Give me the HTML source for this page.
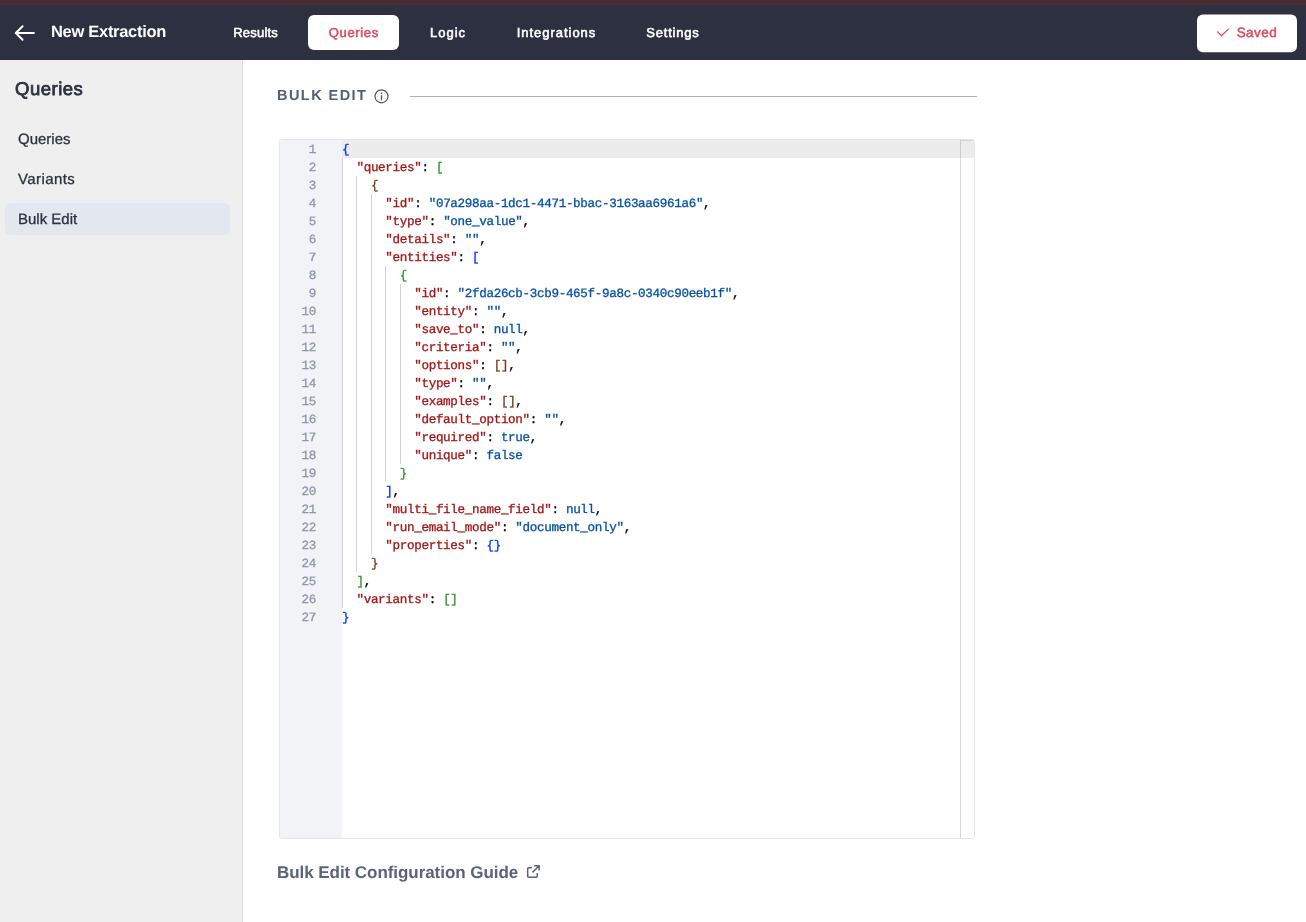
<!DOCTYPE html>
<html lang="en">
<head>
<meta charset="utf-8">
<title>New Extraction - Bulk Edit</title>
<style>
*{box-sizing:border-box;margin:0;padding:0}
html,body{width:1306px;height:922px;overflow:hidden;background:#fff}
body{font-family:"Liberation Sans",sans-serif;position:relative;color:#2d3142;-webkit-font-smoothing:antialiased;text-rendering:geometricPrecision}
.abs{position:absolute;white-space:nowrap;line-height:1}
#wrap{position:absolute;left:0;top:0;width:1306px;height:922px;will-change:transform;opacity:.999}
#strip{position:absolute;left:0;top:0;width:1306px;height:5px;background:#492c30}
#nav{position:absolute;left:0;top:5px;width:1306px;height:55px;background:#2d3040}
#side{position:absolute;left:0;top:60px;width:243px;height:862px;background:#efefef;border-right:1px solid #dcdcdc}
.tab{position:absolute;top:15px;height:35px;border-radius:6px;color:#fff;font-size:13px;font-weight:normal;-webkit-text-stroke:0.55px currentColor;line-height:35px;text-align:center;white-space:nowrap}
.tab.on{background:#fff;color:#dc4a5f}
#sel{position:absolute;left:5px;top:203px;width:225px;height:32px;border-radius:6px;background:#e3e7ef}
#ed{position:absolute;left:279px;top:139px;width:696px;height:700px;border:1px solid #e6e6e7;border-radius:3px;overflow:hidden;background:#fff;font-family:"Liberation Mono",monospace;font-size:12.6px;line-height:18px;letter-spacing:-0.336px;color:#000;-webkit-text-stroke:0.3px currentColor}
#gut{position:absolute;left:0;top:0;width:62px;height:698px;background:#f1f3f7}
#act{position:absolute;left:62px;top:0;width:632px;height:18px;background:#ececec}
#ovr{position:absolute;left:680px;top:0;width:1px;height:698px;background:rgba(127,127,127,.3)}
#ovt{position:absolute;left:681px;top:0;width:13px;height:1px;background:rgba(127,127,127,.22)}
#ed .n{position:absolute;left:0;width:36px;height:18px;margin-top:1px;text-align:right;color:#8e96ad;white-space:pre}
#ed .l{position:absolute;left:62px;height:18px;margin-top:1px;white-space:pre}
#ed .g{position:absolute;width:1px;height:18px;background:#d3d3d3}
#ed span{font-weight:normal}
.k{color:#a31515}.s{color:#0451a5}.b0{color:#0431fa}.b1{color:#319331}.b2{color:#7b3814}
</style>
</head>
<body>
<div id="wrap">
<div id="strip"></div>
<div id="nav"></div>
<svg class="abs" style="left:13px;top:23px" width="24" height="20" viewBox="0 0 24 20"><path d="M20.9 10H3.2M9.6 3.2L2.8 10l6.8 6.8" fill="none" stroke="#fff" stroke-width="2" stroke-linecap="round" stroke-linejoin="round"/></svg>
<div class="abs" id="t_title" style="left:51px;top:23.5px;font-size:16.5px;letter-spacing:-0.3px;font-weight:bold;color:#fff">New Extraction</div>
<div class="tab" id="tab1" style="left:213px;width:85px;letter-spacing:0.23px;text-indent:0.23px">Results</div>
<div class="tab on" id="tab2" style="left:308px;width:91px;letter-spacing:0.65px;text-indent:0.65px">Queries</div>
<div class="tab" id="tab3" style="left:409px;width:77px;letter-spacing:1.04px;text-indent:1.04px">Logic</div>
<div class="tab" id="tab4" style="left:496px;width:120px;letter-spacing:0.97px;text-indent:0.97px">Integrations</div>
<div class="tab" id="tab5" style="left:626px;width:93px;letter-spacing:0.76px;text-indent:0.76px">Settings</div>
<svg class="abs" style="left:1190px;top:10px" width="116" height="48" viewBox="0 0 116 48"><rect x="7" y="4.4" width="100" height="37.9" rx="6" fill="#fff"/></svg>
<svg class="abs" style="left:1215px;top:26px" width="16" height="13" viewBox="0 0 16 13"><path d="M2.6 5.9L6.5 9.7L13.35 3.1" fill="none" stroke="#dc4a5f" stroke-width="1.3" stroke-linecap="round" stroke-linejoin="round"/></svg>
<div class="abs" id="t_saved" style="left:1236.7px;top:26px;font-size:13.5px;letter-spacing:0.42px;-webkit-text-stroke:0.5px #dc4a5f;color:#dc4a5f">Saved</div>

<div id="side"></div>
<div id="sel"></div>
<div class="abs" id="s_h" style="left:15px;top:80px;font-size:18.5px;letter-spacing:0.5px;-webkit-text-stroke:0.8px #2d3142;color:#2d3142">Queries</div>
<div class="abs" id="s_1" style="left:18px;top:132px;-webkit-text-stroke:0.3px #2d3142;font-size:15px;color:#2d3142">Queries</div>
<div class="abs" id="s_2" style="left:18px;top:172px;-webkit-text-stroke:0.3px #2d3142;font-size:15px;letter-spacing:0.4px;color:#2d3142">Variants</div>
<div class="abs" id="s_3" style="left:18px;top:212px;-webkit-text-stroke:0.3px #2d3142;font-size:15px;color:#2d3142">Bulk Edit</div>

<div class="abs" id="m_h" style="left:277px;top:89px;font-size:14.5px;font-weight:bold;letter-spacing:1.45px;color:#555e75">BULK EDIT</div>
<svg class="abs" style="left:373px;top:88px" width="17" height="17" viewBox="0 0 17 17"><circle cx="8.5" cy="8.3" r="6.5" fill="none" stroke="#4f576d" stroke-width="1.2"/><circle cx="8.5" cy="5.3" r="0.9" fill="#4f576d"/><path d="M8.5 7.7V11.8" stroke="#4f576d" stroke-width="1.3" stroke-linecap="round"/></svg>
<div class="abs" style="left:410px;top:96px;width:567px;height:1px;background:#a9b0c4"></div>

<!--EDITOR-->
<div id="ed">
<div id="gut"></div><div id="act"></div><div id="ovr"></div><div id="ovt"></div>
<i class="g" style="left:62.00px;top:18px"></i>
<i class="g" style="left:62.00px;top:36px"></i>
<i class="g" style="left:76.45px;top:36px"></i>
<i class="g" style="left:62.00px;top:54px"></i>
<i class="g" style="left:76.45px;top:54px"></i>
<i class="g" style="left:90.90px;top:54px"></i>
<i class="g" style="left:62.00px;top:72px"></i>
<i class="g" style="left:76.45px;top:72px"></i>
<i class="g" style="left:90.90px;top:72px"></i>
<i class="g" style="left:62.00px;top:90px"></i>
<i class="g" style="left:76.45px;top:90px"></i>
<i class="g" style="left:90.90px;top:90px"></i>
<i class="g" style="left:62.00px;top:108px"></i>
<i class="g" style="left:76.45px;top:108px"></i>
<i class="g" style="left:90.90px;top:108px"></i>
<i class="g" style="left:62.00px;top:126px"></i>
<i class="g" style="left:76.45px;top:126px"></i>
<i class="g" style="left:90.90px;top:126px"></i>
<i class="g" style="left:105.34px;top:126px"></i>
<i class="g" style="left:62.00px;top:144px"></i>
<i class="g" style="left:76.45px;top:144px"></i>
<i class="g" style="left:90.90px;top:144px"></i>
<i class="g" style="left:105.34px;top:144px"></i>
<i class="g" style="left:119.79px;top:144px"></i>
<i class="g" style="left:62.00px;top:162px"></i>
<i class="g" style="left:76.45px;top:162px"></i>
<i class="g" style="left:90.90px;top:162px"></i>
<i class="g" style="left:105.34px;top:162px"></i>
<i class="g" style="left:119.79px;top:162px"></i>
<i class="g" style="left:62.00px;top:180px"></i>
<i class="g" style="left:76.45px;top:180px"></i>
<i class="g" style="left:90.90px;top:180px"></i>
<i class="g" style="left:105.34px;top:180px"></i>
<i class="g" style="left:119.79px;top:180px"></i>
<i class="g" style="left:62.00px;top:198px"></i>
<i class="g" style="left:76.45px;top:198px"></i>
<i class="g" style="left:90.90px;top:198px"></i>
<i class="g" style="left:105.34px;top:198px"></i>
<i class="g" style="left:119.79px;top:198px"></i>
<i class="g" style="left:62.00px;top:216px"></i>
<i class="g" style="left:76.45px;top:216px"></i>
<i class="g" style="left:90.90px;top:216px"></i>
<i class="g" style="left:105.34px;top:216px"></i>
<i class="g" style="left:119.79px;top:216px"></i>
<i class="g" style="left:62.00px;top:234px"></i>
<i class="g" style="left:76.45px;top:234px"></i>
<i class="g" style="left:90.90px;top:234px"></i>
<i class="g" style="left:105.34px;top:234px"></i>
<i class="g" style="left:119.79px;top:234px"></i>
<i class="g" style="left:62.00px;top:252px"></i>
<i class="g" style="left:76.45px;top:252px"></i>
<i class="g" style="left:90.90px;top:252px"></i>
<i class="g" style="left:105.34px;top:252px"></i>
<i class="g" style="left:119.79px;top:252px"></i>
<i class="g" style="left:62.00px;top:270px"></i>
<i class="g" style="left:76.45px;top:270px"></i>
<i class="g" style="left:90.90px;top:270px"></i>
<i class="g" style="left:105.34px;top:270px"></i>
<i class="g" style="left:119.79px;top:270px"></i>
<i class="g" style="left:62.00px;top:288px"></i>
<i class="g" style="left:76.45px;top:288px"></i>
<i class="g" style="left:90.90px;top:288px"></i>
<i class="g" style="left:105.34px;top:288px"></i>
<i class="g" style="left:119.79px;top:288px"></i>
<i class="g" style="left:62.00px;top:306px"></i>
<i class="g" style="left:76.45px;top:306px"></i>
<i class="g" style="left:90.90px;top:306px"></i>
<i class="g" style="left:105.34px;top:306px"></i>
<i class="g" style="left:119.79px;top:306px"></i>
<i class="g" style="left:62.00px;top:324px"></i>
<i class="g" style="left:76.45px;top:324px"></i>
<i class="g" style="left:90.90px;top:324px"></i>
<i class="g" style="left:105.34px;top:324px"></i>
<i class="g" style="left:62.00px;top:342px"></i>
<i class="g" style="left:76.45px;top:342px"></i>
<i class="g" style="left:90.90px;top:342px"></i>
<i class="g" style="left:62.00px;top:360px"></i>
<i class="g" style="left:76.45px;top:360px"></i>
<i class="g" style="left:90.90px;top:360px"></i>
<i class="g" style="left:62.00px;top:378px"></i>
<i class="g" style="left:76.45px;top:378px"></i>
<i class="g" style="left:90.90px;top:378px"></i>
<i class="g" style="left:62.00px;top:396px"></i>
<i class="g" style="left:76.45px;top:396px"></i>
<i class="g" style="left:90.90px;top:396px"></i>
<i class="g" style="left:62.00px;top:414px"></i>
<i class="g" style="left:76.45px;top:414px"></i>
<i class="g" style="left:62.00px;top:432px"></i>
<i class="g" style="left:62.00px;top:450px"></i>
<div class="n" style="top:0px">1</div>
<div class="n" style="top:18px">2</div>
<div class="n" style="top:36px">3</div>
<div class="n" style="top:54px">4</div>
<div class="n" style="top:72px">5</div>
<div class="n" style="top:90px">6</div>
<div class="n" style="top:108px">7</div>
<div class="n" style="top:126px">8</div>
<div class="n" style="top:144px">9</div>
<div class="n" style="top:162px">10</div>
<div class="n" style="top:180px">11</div>
<div class="n" style="top:198px">12</div>
<div class="n" style="top:216px">13</div>
<div class="n" style="top:234px">14</div>
<div class="n" style="top:252px">15</div>
<div class="n" style="top:270px">16</div>
<div class="n" style="top:288px">17</div>
<div class="n" style="top:306px">18</div>
<div class="n" style="top:324px">19</div>
<div class="n" style="top:342px">20</div>
<div class="n" style="top:360px">21</div>
<div class="n" style="top:378px">22</div>
<div class="n" style="top:396px">23</div>
<div class="n" style="top:414px">24</div>
<div class="n" style="top:432px">25</div>
<div class="n" style="top:450px">26</div>
<div class="n" style="top:468px">27</div>
<div class="l" style="top:0px"><span class="b0">{</span></div>
<div class="l" style="top:18px">  <span class="k">"queries"</span>: <span class="b1">[</span></div>
<div class="l" style="top:36px">    <span class="b2">{</span></div>
<div class="l" style="top:54px">      <span class="k">"id"</span>: <span class="s">"07a298aa-1dc1-4471-bbac-3163aa6961a6"</span>,</div>
<div class="l" style="top:72px">      <span class="k">"type"</span>: <span class="s">"one_value"</span>,</div>
<div class="l" style="top:90px">      <span class="k">"details"</span>: <span class="s">""</span>,</div>
<div class="l" style="top:108px">      <span class="k">"entities"</span>: <span class="b0">[</span></div>
<div class="l" style="top:126px">        <span class="b1">{</span></div>
<div class="l" style="top:144px">          <span class="k">"id"</span>: <span class="s">"2fda26cb-3cb9-465f-9a8c-0340c90eeb1f"</span>,</div>
<div class="l" style="top:162px">          <span class="k">"entity"</span>: <span class="s">""</span>,</div>
<div class="l" style="top:180px">          <span class="k">"save_to"</span>: <span class="s">null</span>,</div>
<div class="l" style="top:198px">          <span class="k">"criteria"</span>: <span class="s">""</span>,</div>
<div class="l" style="top:216px">          <span class="k">"options"</span>: <span class="b2">[</span><span class="b2">]</span>,</div>
<div class="l" style="top:234px">          <span class="k">"type"</span>: <span class="s">""</span>,</div>
<div class="l" style="top:252px">          <span class="k">"examples"</span>: <span class="b2">[</span><span class="b2">]</span>,</div>
<div class="l" style="top:270px">          <span class="k">"default_option"</span>: <span class="s">""</span>,</div>
<div class="l" style="top:288px">          <span class="k">"required"</span>: <span class="s">true</span>,</div>
<div class="l" style="top:306px">          <span class="k">"unique"</span>: <span class="s">false</span></div>
<div class="l" style="top:324px">        <span class="b1">}</span></div>
<div class="l" style="top:342px">      <span class="b0">]</span>,</div>
<div class="l" style="top:360px">      <span class="k">"multi_file_name_field"</span>: <span class="s">null</span>,</div>
<div class="l" style="top:378px">      <span class="k">"run_email_mode"</span>: <span class="s">"document_only"</span>,</div>
<div class="l" style="top:396px">      <span class="k">"properties"</span>: <span class="b0">{</span><span class="b0">}</span></div>
<div class="l" style="top:414px">    <span class="b2">}</span></div>
<div class="l" style="top:432px">  <span class="b1">]</span>,</div>
<div class="l" style="top:450px">  <span class="k">"variants"</span>: <span class="b1">[</span><span class="b1">]</span></div>
<div class="l" style="top:468px"><span class="b0">}</span></div>
</div>
<!--/EDITOR-->

<div class="abs" id="m_link" style="left:277px;top:864px;font-size:17px;font-weight:bold;letter-spacing:-0.055px;color:#5a6378">Bulk Edit Configuration Guide</div>
<svg class="abs" style="left:525px;top:863px" width="17" height="17" viewBox="0 0 17 17"><path d="M6.9 4.75H3.6Q2.65 4.75 2.65 5.7V13.3Q2.65 14.25 3.6 14.25H11.3Q12.25 14.25 12.25 13.3V10.1M9.2 2.75H14.15V7.6M14.15 2.75L7.5 9.4" fill="none" stroke="#5a6378" stroke-width="1.5" stroke-linecap="butt" stroke-linejoin="miter"/></svg>
</div>
</body>
</html>
